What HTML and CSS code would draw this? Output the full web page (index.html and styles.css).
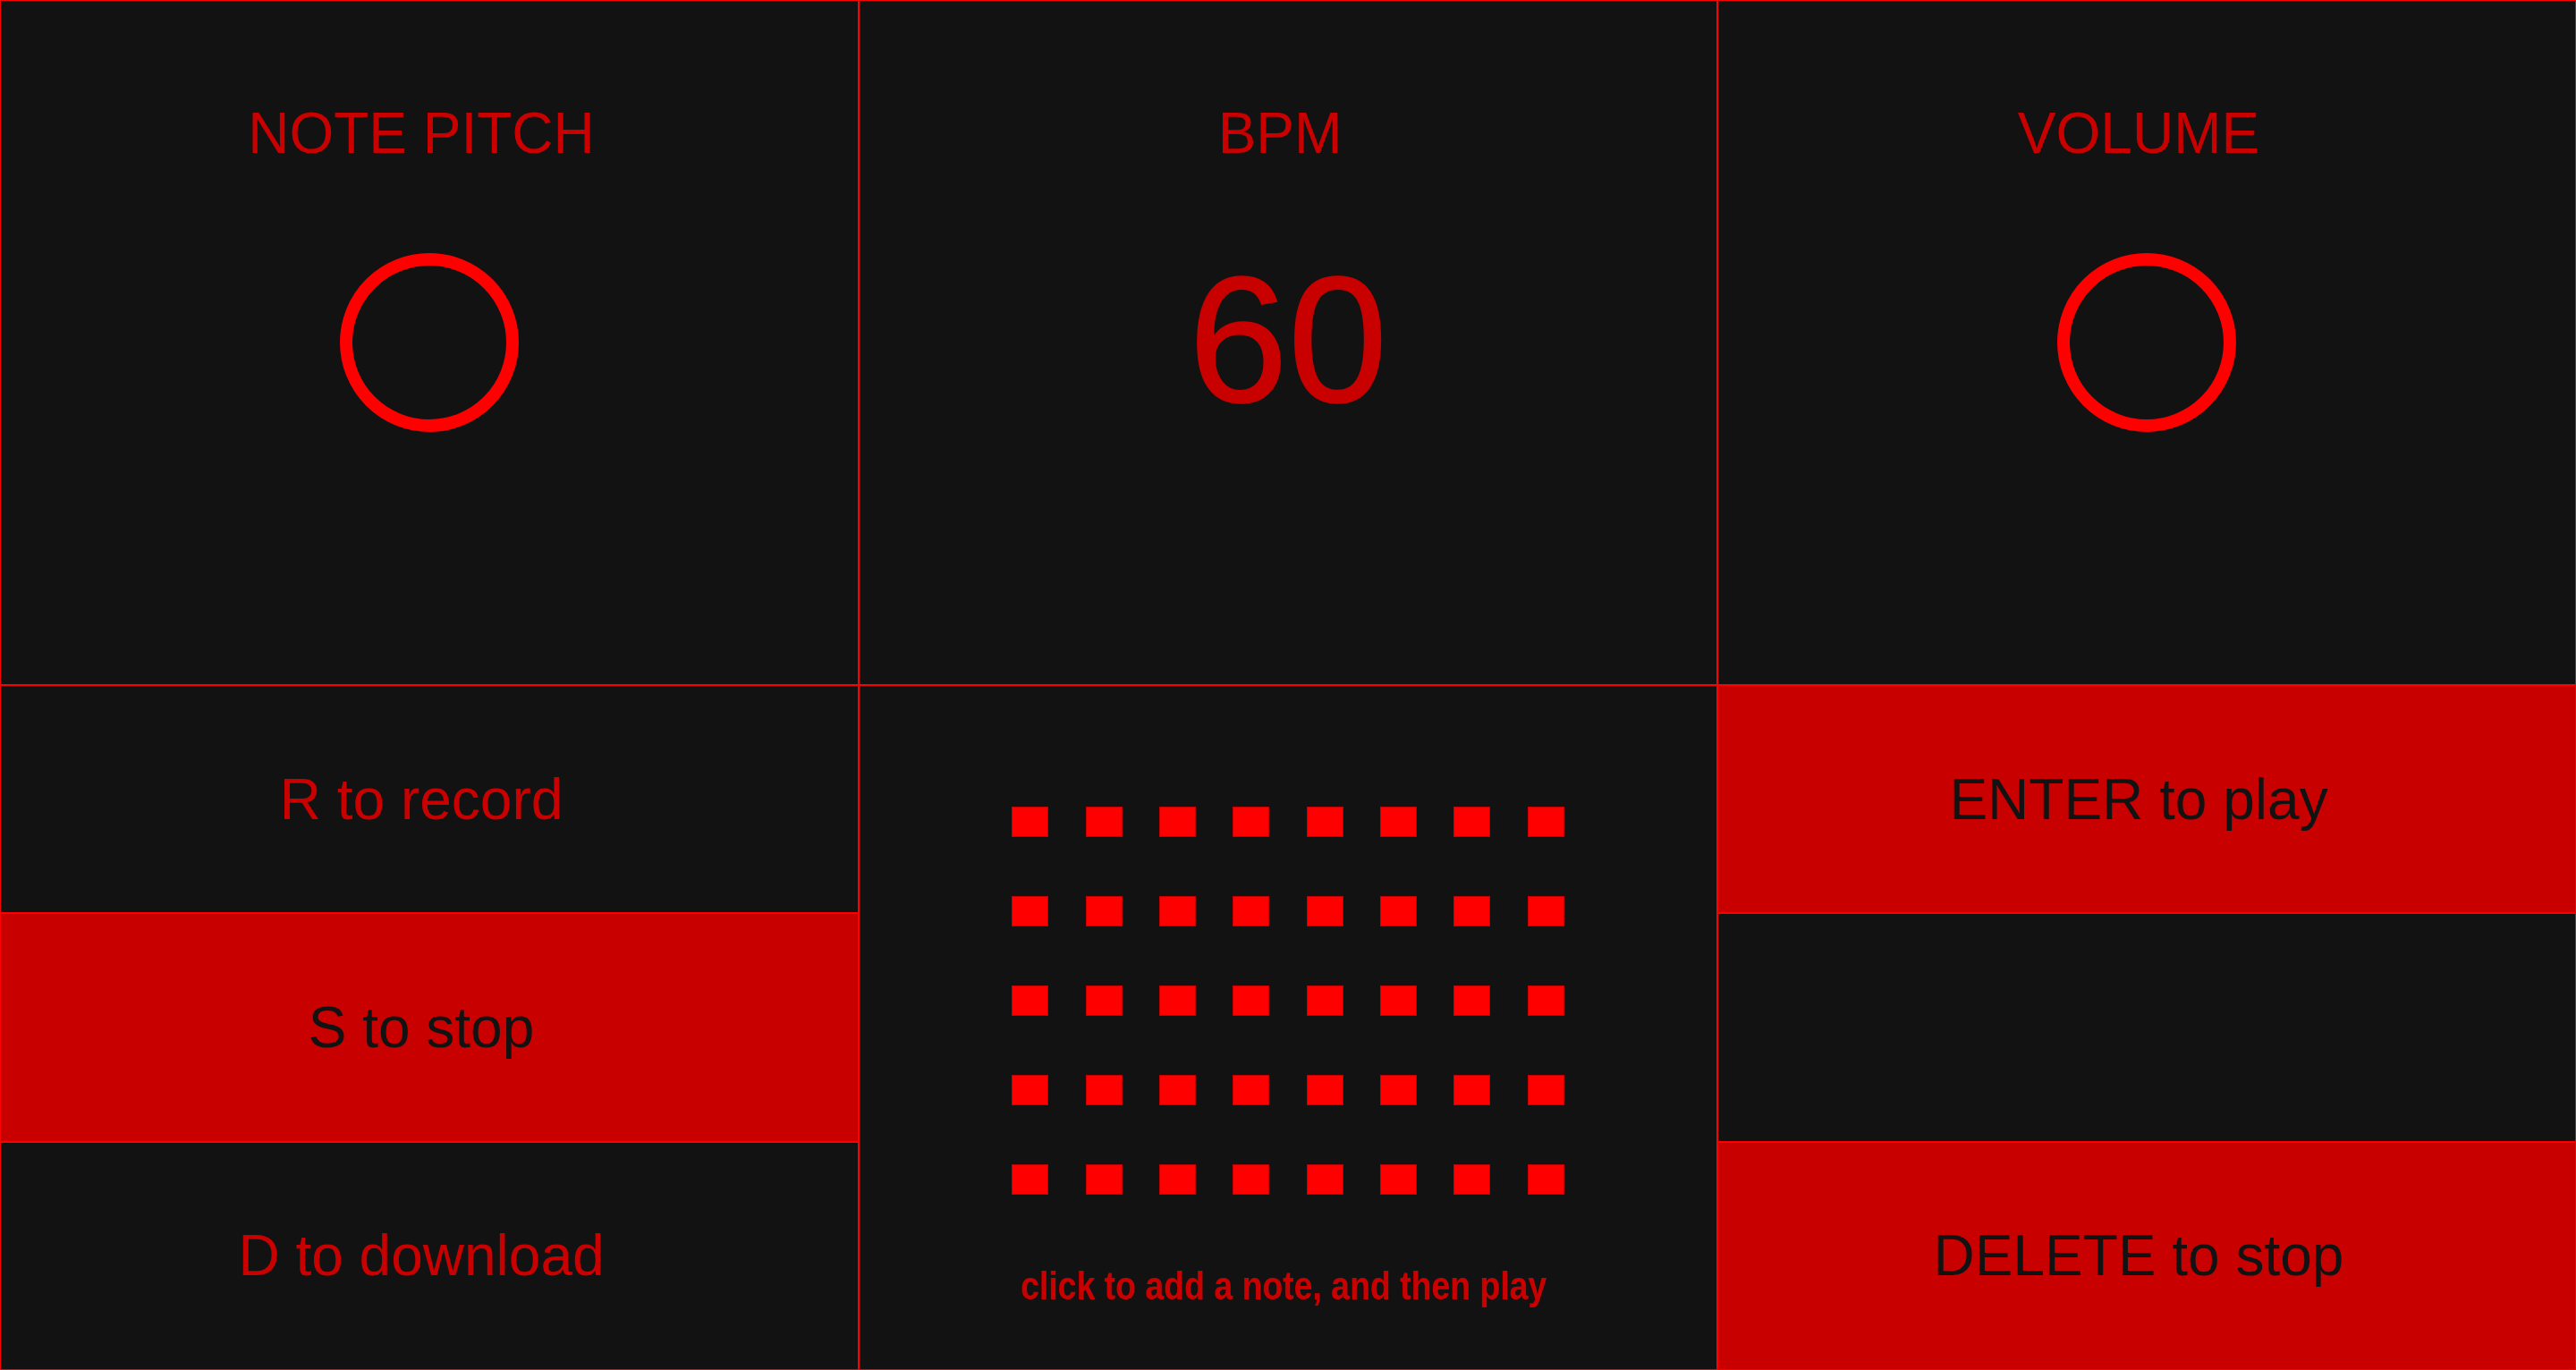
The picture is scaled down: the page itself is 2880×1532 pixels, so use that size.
FILE: index.html
```html
<!DOCTYPE html>
<html lang="en">
<head>
<meta charset="utf-8">
<title>Sequencer</title>
<link rel="stylesheet" href="styles.css">
</head>
<body>
<main class="board">
  <section class="cell panel">
    <h2 class="title">NOTE PITCH</h2>
    <div class="ring"></div>
  </section>
  <section class="cell panel">
    <h2 class="title">BPM</h2>
    <div class="bpm">60</div>
  </section>
  <section class="cell panel">
    <h2 class="title">VOLUME</h2>
    <div class="ring"></div>
  </section>
  <section class="stack">
    <div class="key">R to record</div>
    <div class="key on">S to stop</div>
    <div class="key">D to download</div>
  </section>
  <section class="cell seq">
    <div class="grid">
      <span class="step"></span><span class="step"></span><span class="step"></span><span class="step"></span><span class="step"></span><span class="step"></span><span class="step"></span><span class="step"></span>
      <span class="step"></span><span class="step"></span><span class="step"></span><span class="step"></span><span class="step"></span><span class="step"></span><span class="step"></span><span class="step"></span>
      <span class="step"></span><span class="step"></span><span class="step"></span><span class="step"></span><span class="step"></span><span class="step"></span><span class="step"></span><span class="step"></span>
      <span class="step"></span><span class="step"></span><span class="step"></span><span class="step"></span><span class="step"></span><span class="step"></span><span class="step"></span><span class="step"></span>
      <span class="step"></span><span class="step"></span><span class="step"></span><span class="step"></span><span class="step"></span><span class="step"></span><span class="step"></span><span class="step"></span>
    </div>
    <p class="hint">click to add a note, and then play</p>
  </section>
  <section class="stack">
    <div class="key on">ENTER to play</div>
    <div class="key"></div>
    <div class="key on">DELETE to stop</div>
  </section>
</main>
</body>
</html>
```
FILE: styles.css
```css
html, body {
  margin: 0;
  height: 100%;
  background: #121212;
  overflow: hidden;
}

body {
  font-family: "Liberation Sans", Arial, sans-serif;
  color: #c80000;
}

.board {
  display: grid;
  grid-template-columns: repeat(3, 1fr);
  grid-template-rows: repeat(2, 1fr);
  height: 100vh;
}

.cell {
  border: 1px solid #ff0000;
  box-sizing: border-box;
  min-height: 0;
}

.panel {
  display: grid;
  place-items: center;
}

.panel > * {
  grid-area: 1 / 1;
}

.title {
  align-self: start;
  margin: 111px 0 0;
  padding-right: 18px;
  font-size: 64px;
  font-weight: 400;
  line-height: normal;
}

.ring {
  width: 200px;
  height: 200px;
  box-sizing: border-box;
  border: 14px solid #ff0000;
  border-radius: 50%;
}

.bpm {
  font-size: 200px;
  line-height: normal;
  margin-bottom: 6px;
  -webkit-text-stroke: 1.5px #c80000;
}

.stack {
  display: grid;
  grid-template-rows: repeat(3, 1fr);
  min-height: 0;
}

.key {
  border: 1px solid #ff0000;
  box-sizing: border-box;
  display: flex;
  align-items: center;
  justify-content: center;
  padding-right: 18px;
  font-size: 64px;
}

.key.on {
  background: #c80000;
  color: #121212;
}

.seq {
  display: flex;
  flex-direction: column;
  align-items: center;
  padding-top: 135px;
}

.grid {
  display: grid;
  grid-template-columns: repeat(8, 41px);
  grid-auto-rows: 34px;
  column-gap: 41.3px;
  row-gap: 66px;
}

.step {
  background: #ff0000;
  border: 1px solid #c80000;
  box-sizing: border-box;
}

.hint {
  margin: 77px 0 0;
  padding-right: 12px;
  font-size: 44px;
  font-weight: 700;
  line-height: normal;
  white-space: nowrap;
  transform: scaleX(0.85);
}
```
